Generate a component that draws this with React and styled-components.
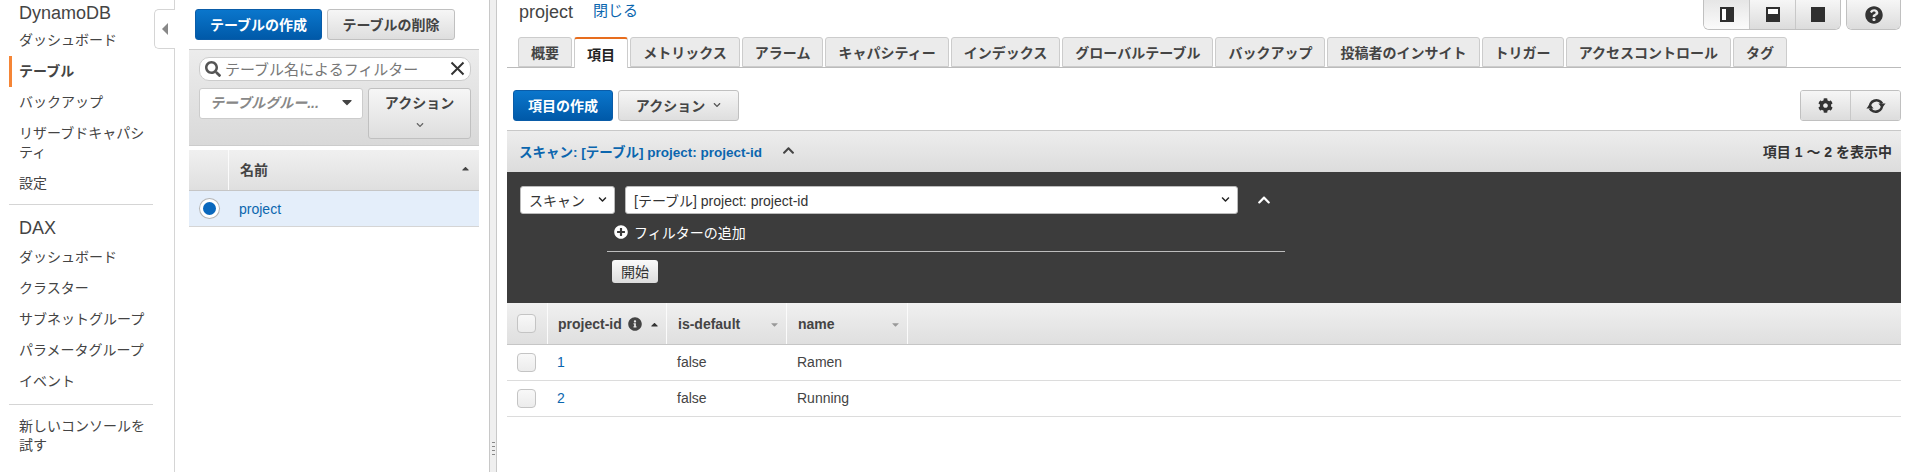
import React from "react"
import styled, { createGlobalStyle } from "styled-components"
import {
  FaCaretDown,
  FaCaretUp,
  FaChevronDown,
  FaChevronUp,
  FaCog,
  FaInfoCircle,
  FaPlusCircle,
  FaQuestionCircle,
  FaSearch,
} from "react-icons/fa"

const GlobalStyle = createGlobalStyle`
  html, body {
    margin: 0;
    padding: 0;
    background: #fff;
  }
  body {
    font-family: "Liberation Sans", "Noto Sans CJK JP", sans-serif;
    font-size: 14px;
    color: #444;
  }
`

const Page = styled.div`
  display: flex;
  width: 1915px;
  height: 472px;
  overflow: hidden;
`

const Sidebar = styled.nav`
  position: relative;
  box-sizing: border-box;
  flex: 0 0 175px;
  border-right: 1px solid #d5d5d5;
  padding-left: 9px;
`

const NavHeading = styled.div`
  font-size: 18px;
  line-height: 24px;
  padding: 1px 0 0 10px;
  margin-bottom: ${(p) => p.$after || 0}px;
`

const NavItem = styled.div`
  box-sizing: border-box;
  width: 144px;
  line-height: 19px;
  padding: 6px 6px 6px ${(p) => (p.$active ? 7 : 10)}px;
  font-weight: ${(p) => (p.$active ? 700 : 400)};
  border-left: ${(p) => (p.$active ? "3px solid #f58536" : "none")};
`

const NavRule = styled.div`
  width: 144px;
  height: 1px;
  background: #d5d5d5;
  margin: ${(p) => p.$margin};
`

const CollapseTab = styled.div`
  position: absolute;
  top: 9px;
  left: 154px;
  box-sizing: border-box;
  width: 21px;
  height: 40px;
  background: #fff;
  border: 1px solid #d5d5d5;
  border-right: none;
  border-radius: 5px 0 0 5px;
  display: flex;
  align-items: center;
  justify-content: center;
  &::before {
    content: "";
    border-style: solid;
    border-width: 6px 6px 6px 0;
    border-color: transparent #888 transparent transparent;
  }
`

const TablePanel = styled.section`
  box-sizing: border-box;
  flex: 0 0 314px;
  padding: 9px 10px 0 14px;
`

const ButtonRow = styled.div`
  display: flex;
  gap: 5px;
  padding-left: 6px;
  margin-bottom: 9px;
`

const Button = styled.div`
  box-sizing: border-box;
  display: flex;
  align-items: center;
  align-content: center;
  justify-content: center;
  flex-wrap: wrap;
  gap: ${(p) => p.$gap || 0}px;
  width: ${(p) => p.$width}px;
  height: ${(p) => p.$height || 31}px;
  padding-bottom: ${(p) => p.$bottom ?? 2}px;
  border-radius: 3px;
  font-weight: 700;
  font-size: 14px;
  color: ${(p) => (p.$primary ? "#fff" : "#444")};
  border: 1px solid ${(p) => (p.$primary ? "#0a5ca8" : "#c0c0c0")};
  background: ${(p) =>
    p.$primary
      ? "linear-gradient(#0a76cc, #0059a8)"
      : "linear-gradient(#f6f6f6, #dedede)"};
`

const FilterBox = styled.div`
  box-sizing: border-box;
  height: 97px;
  padding: 7px 8px 0 10px;
  background: linear-gradient(#ececec, #d9d9d9);
  border-top: 1px solid #ccc;
  border-bottom: 1px solid #ccc;
`

const SearchField = styled.div`
  box-sizing: border-box;
  display: flex;
  align-items: center;
  height: 24px;
  padding: 0 5px 1px;
  gap: 4px;
  background: #fff;
  border: 1px solid #ccc;
  border-radius: 10px;
  font-size: 15px;
  color: #777;
  margin-bottom: 7px;
  white-space: nowrap;
  svg:last-child {
    margin-left: auto;
  }
`

const FilterRow = styled.div`
  display: flex;
  gap: 5px;
  align-items: flex-start;
`

const GroupSelect = styled.div`
  box-sizing: border-box;
  display: flex;
  align-items: center;
  justify-content: space-between;
  width: 164px;
  height: 31px;
  padding: 0 7px 4px 10px;
  background: #fff;
  border: 1px solid #ccc;
  border-radius: 3px;
  font-style: italic;
  font-weight: 700;
  color: #888;
`

const ActionWord = styled.span`
  flex: 0 0 100%;
  text-align: center;
  margin-bottom: 9px;
`

const GridHead = styled.div`
  display: flex;
  height: ${(p) => p.$height}px;
  margin-top: ${(p) => p.$top || 0}px;
  background: linear-gradient(#f0f0f0, #dfdfdf);
  border-bottom: 1px solid #c6c6c6;
  font-weight: 700;
  color: #444;
`

const HeadCell = styled.div`
  box-sizing: border-box;
  display: flex;
  align-items: center;
  gap: 6px;
  flex: ${(p) => (p.$width ? `0 0 ${p.$width}px` : "1")};
  padding: ${(p) => p.$top || 0}px ${(p) => p.$right ?? 8}px ${(p) => p.$bottom || 0}px ${(p) => p.$left ?? 12}px;
  border-right: ${(p) => (p.$plain ? "none" : "1px solid #fbfbfb")};
  svg:last-child {
    margin-left: auto;
  }
`

const SelectedRow = styled.div`
  display: flex;
  align-items: center;
  height: 35px;
  background: #e4eefa;
  border-bottom: 1px solid #d5d5d5;
`

const Radio = styled.span`
  box-sizing: border-box;
  width: 19px;
  height: 19px;
  margin: 0 20px 0 11px;
  border-radius: 50%;
  background: #0a68bd;
  border: 3px solid #fff;
  box-shadow: 0 0 0 1px #b5b5b5;
`

const Link = styled.a`
  color: #0b66ae;
  font-size: ${(p) => p.$size || 14}px;
  font-weight: ${(p) => p.$weight || 400};
  text-decoration: none;
`

const Splitter = styled.div`
  box-sizing: border-box;
  flex: 0 0 8px;
  display: flex;
  align-items: flex-end;
  justify-content: center;
  padding-bottom: 14px;
  background: #efefef;
  border-left: 1px solid #c8c8c8;
  border-right: 1px solid #c8c8c8;
  &::before {
    content: "";
    width: 3px;
    height: 16px;
    background: repeating-linear-gradient(#888 0 1px, transparent 1px 4px);
  }
`

const Main = styled.main`
  box-sizing: border-box;
  flex: 1;
  min-width: 0;
  padding: 0 14px 0 10px;
`

const TitleBar = styled.div`
  display: flex;
  align-items: flex-start;
  height: 37px;
  padding-left: 12px;
`

const Title = styled.h1`
  margin: 1px 20px 0 0;
  font-size: 18px;
  font-weight: 400;
  line-height: 22px;
  color: #444;
`

const TitleLink = styled(Link)`
  line-height: 22px;
`

const TitleTools = styled.div`
  display: flex;
  gap: 5px;
  margin-left: auto;
`

const Segmented = styled.div`
  box-sizing: border-box;
  display: flex;
  height: ${(p) => (p.$boxed ? 31 : 30)}px;
  margin-left: ${(p) => (p.$boxed ? "auto" : 0)};
  border: 1px solid #c0c0c0;
  border-top: ${(p) => (p.$boxed ? "1px solid #c0c0c0" : "none")};
  border-radius: ${(p) => (p.$boxed ? "3px" : "0 0 6px 6px")};
  overflow: hidden;
`

const Segment = styled.div`
  box-sizing: border-box;
  display: flex;
  align-items: center;
  justify-content: center;
  width: ${(p) => p.$width}px;
  color: #333;
  background: ${(p) =>
    p.$active
      ? "linear-gradient(#e6e6e6, #fbfbfb)"
      : "linear-gradient(#f6f6f6, #dcdcdc)"};
  & + & {
    border-left: 1px solid #c8c8c8;
  }
`

const Tabs = styled.div`
  display: flex;
  gap: 2px;
  height: 30px;
  padding-left: 11px;
  border-bottom: 1px solid #bbb;
  box-sizing: content-box;
`

const Tab = styled.div`
  box-sizing: border-box;
  display: flex;
  align-items: center;
  height: ${(p) => (p.$active ? 31 : 30)}px;
  padding: 0 12.04px;
  font-weight: 700;
  font-size: 14px;
  white-space: nowrap;
  color: ${(p) => (p.$active ? "#222" : "#444")};
  background: ${(p) => (p.$active ? "#fff" : "#ebebeb")};
  border: 1px solid #ccc;
  border-bottom: ${(p) => (p.$active ? "none" : "1px solid #ccc")};
  border-top: ${(p) => (p.$active ? "2px solid #e76d1e" : "1px solid #ccc")};
  border-radius: 3px 3px 0 0;
`

const Toolbar = styled.div`
  display: flex;
  gap: 5px;
  padding: 22px 0 0 6px;
  height: 31px;
  margin-bottom: 9px;
`

const TableBox = styled.div`
  border-top: 1px solid #c8c8c8;
`

const ScanBar = styled.div`
  display: flex;
  align-items: center;
  justify-content: space-between;
  box-sizing: border-box;
  height: 41px;
  padding: 0 9px 2px 12px;
  background: linear-gradient(#ededed, #dcdcdc);
  font-weight: 700;
  font-size: 13.5px;
`

const ScanTitle = styled.div`
  display: flex;
  align-items: center;
  gap: 20px;
  color: #444;
`

const Count = styled.span`
  font-size: 14px;
  color: #333;
`

const ScanPanel = styled.div`
  box-sizing: border-box;
  height: 131px;
  padding-top: 14px;
  background: #3c3c3c;
  color: #fff;
`

const SelectRow = styled.div`
  display: flex;
  align-items: center;
  padding-left: 13px;
  gap: 10px;
  svg:last-child {
    margin-left: 9px;
  }
`

const NativeSelect = styled.div`
  box-sizing: border-box;
  display: flex;
  align-items: center;
  justify-content: space-between;
  width: ${(p) => p.$width}px;
  height: 28px;
  padding: 0 7px 1px 8px;
  background: #fff;
  color: #333;
  border: 1px solid #bbb;
  border-radius: 3px;
  font-size: 14px;
  white-space: nowrap;
`

const AddFilter = styled.div`
  display: flex;
  align-items: center;
  gap: 6px;
  margin: 8px 0 0 107px;
  height: 20px;
  font-size: 14px;
`

const FilterRule = styled.div`
  width: 678px;
  height: 1px;
  margin: 9px 0 8px 100px;
  background: #bdbdbd;
`

const StartButton = styled.div`
  box-sizing: border-box;
  display: flex;
  align-items: center;
  justify-content: center;
  width: 46px;
  height: 23px;
  margin-left: 105px;
  padding-bottom: 1px;
  border-radius: 3px;
  font-size: 14px;
  color: #333;
  background: linear-gradient(#fafafa, #dcdcdc);
`

const Check = styled.span`
  box-sizing: border-box;
  display: block;
  flex: none;
  width: 19px;
  height: 19px;
  border: 1px solid #c4c4c4;
  border-radius: 4px;
  background: linear-gradient(#f8f8f8, #ececec);
`

const Row = styled.div`
  display: grid;
  grid-template-columns: 40px 120px 120px 1fr;
  align-items: center;
  height: 35px;
  border-bottom: 1px solid #dcdcdc;
  font-size: 14px;
`

const CheckCell = styled.div`
  padding-left: 10px;
`

const Cell = styled.div`
  padding: 0 0 2px ${(p) => p.$left ?? 10}px;
`

const navTop = ["ダッシュボード", "バックアップ"]
const daxItems = ["ダッシュボード", "クラスター", "サブネットグループ", "パラメータグループ", "イベント"]
const tabs = ["概要", "項目", "メトリックス", "アラーム", "キャパシティー", "インデックス", "グローバルテーブル", "バックアップ", "投稿者のインサイト", "トリガー", "アクセスコントロール", "タグ"]
const rows = [
  { id: 1, name: "Ramen" },
  { id: 2, name: "Running" },
]

// split view glyph: dark rectangle with a light pane cut out
const PaneIcon = ({ pane }) => (
  <svg width="14" height="15" viewBox="0 0 14 15">
    <rect width="14" height="15" fill="#2f2f2f" />
    {pane === "left" && <rect x="2" y="2" width="4" height="11" fill="#fff" />}
    {pane === "top" && <rect x="2" y="2" width="10" height="5" fill="#fff" />}
  </svg>
)

// two arcs round a ring, arrow head on the right pointing down, on the left pointing up
const RefreshIcon = () => (
  <svg width="20" height="20" viewBox="0 0 20 20" fill="none">
    <path d="M4 12 A6.5 6.5 0 0 1 16 7.5" stroke="#333" strokeWidth="2.6" />
    <path d="M16 8 A6.5 6.5 0 0 1 4 12.5" stroke="#333" strokeWidth="2.6" />
    <path d="M12.4 7.6 H19.6 L16 12 Z" fill="#333" />
    <path d="M0.4 12.4 H7.6 L4 8 Z" fill="#333" />
  </svg>
)

const ClearIcon = () => (
  <svg width="15" height="15" viewBox="0 0 15 15">
    <path d="M1.5 1.5 L13.5 13.5 M13.5 1.5 L1.5 13.5" stroke="#333" strokeWidth="2" />
  </svg>
)

const App = () => (
  <Page>
    <GlobalStyle />
    <Sidebar>
      <NavHeading>DynamoDB</NavHeading>
      <NavItem>{navTop[0]}</NavItem>
      <NavItem $active>テーブル</NavItem>
      <NavItem>{navTop[1]}</NavItem>
      <NavItem>リザーブドキャパシティ</NavItem>
      <NavItem>設定</NavItem>
      <NavRule $margin="5px 0 10px" />
      <NavHeading $after={2}>DAX</NavHeading>
      {daxItems.map((item) => (
        <NavItem key={item}>{item}</NavItem>
      ))}
      <NavRule $margin="7px 0 6px" />
      <NavItem>新しいコンソールを試す</NavItem>
      <CollapseTab />
    </Sidebar>

    <TablePanel>
      <ButtonRow>
        <Button $primary $width={127}>テーブルの作成</Button>
        <Button $width={128}>テーブルの削除</Button>
      </ButtonRow>
      <FilterBox>
        <SearchField>
          <FaSearch size={16} color="#555" />
          テーブル名によるフィルター
          <ClearIcon />
        </SearchField>
        <FilterRow>
          <GroupSelect>
            テーブルグルー...
            <FaCaretDown size={16} color="#444" />
          </GroupSelect>
          <Button $width={103} $height={51} $bottom={7}>
            <ActionWord>アクション</ActionWord>
            <FaChevronDown size={8} color="#666" />
          </Button>
        </FilterRow>
      </FilterBox>
      <GridHead $top={4} $height={40}>
        <HeadCell $width={40} />
        <HeadCell $plain $left={11} $bottom={3}>
          名前
          <FaCaretUp size={11} color="#444" />
        </HeadCell>
      </GridHead>
      <SelectedRow>
        <Radio />
        <Link>project</Link>
      </SelectedRow>
    </TablePanel>

    <Splitter />

    <Main>
      <TitleBar>
        <Title>project</Title>
        <TitleLink $size={15}>閉じる</TitleLink>
        <TitleTools>
          <Segmented>
            <Segment $active $width={45}><PaneIcon pane="left" /></Segment>
            <Segment $width={46}><PaneIcon pane="top" /></Segment>
            <Segment $width={45}><PaneIcon /></Segment>
          </Segmented>
          <Segmented>
            <Segment $width={53}><FaQuestionCircle size={18} /></Segment>
          </Segmented>
        </TitleTools>
      </TitleBar>

      <Tabs>
        {tabs.map((tab) => (
          <Tab key={tab} $active={tab === "項目"}>{tab}</Tab>
        ))}
      </Tabs>

      <Toolbar>
        <Button $primary $width={100}>項目の作成</Button>
        <Button $width={121} $gap={8}>
          アクション
          <FaChevronDown size={8} color="#555" />
        </Button>
        <Segmented $boxed>
          <Segment $width={49}><FaCog size={15} /></Segment>
          <Segment $width={50}><RefreshIcon /></Segment>
        </Segmented>
      </Toolbar>

      <TableBox>
        <ScanBar>
          <ScanTitle>
            <Link $weight={700} $size={13.5}>スキャン: [テーブル] project: project-id</Link>
            <FaChevronUp size={13} color="#444" />
          </ScanTitle>
          <Count>項目 1 ～ 2 を表示中</Count>
        </ScanBar>
        <ScanPanel>
          <SelectRow>
            <NativeSelect $width={95}>スキャン<FaChevronDown size={9} color="#222" /></NativeSelect>
            <NativeSelect $width={613}>[テーブル] project: project-id<FaChevronDown size={9} color="#222" /></NativeSelect>
            <FaChevronUp size={14} color="#fff" />
          </SelectRow>
          <AddFilter>
            <FaPlusCircle size={14} color="#fff" />
            フィルターの追加
          </AddFilter>
          <FilterRule />
          <StartButton>開始</StartButton>
        </ScanPanel>
        <GridHead $height={41}>
          <HeadCell $width={41} $left={10}><Check /></HeadCell>
          <HeadCell $width={119} $left={10} $right={6} $top={1}>
            project-id
            <FaInfoCircle size={14} color="#444" />
            <FaCaretUp size={11} color="#333" />
          </HeadCell>
          <HeadCell $width={120} $left={11} $right={6} $top={1}>
            is-default
            <FaCaretDown size={11} color="#999" />
          </HeadCell>
          <HeadCell $width={121} $left={11} $right={6} $top={1}>
            name
            <FaCaretDown size={11} color="#999" />
          </HeadCell>
          <HeadCell $plain />
        </GridHead>
        {rows.map((row) => (
          <Row key={row.id}>
            <CheckCell><Check /></CheckCell>
            <Cell><Link>{row.id}</Link></Cell>
            <Cell>false</Cell>
            <Cell>{row.name}</Cell>
          </Row>
        ))}
      </TableBox>
    </Main>
  </Page>
)

export default App
